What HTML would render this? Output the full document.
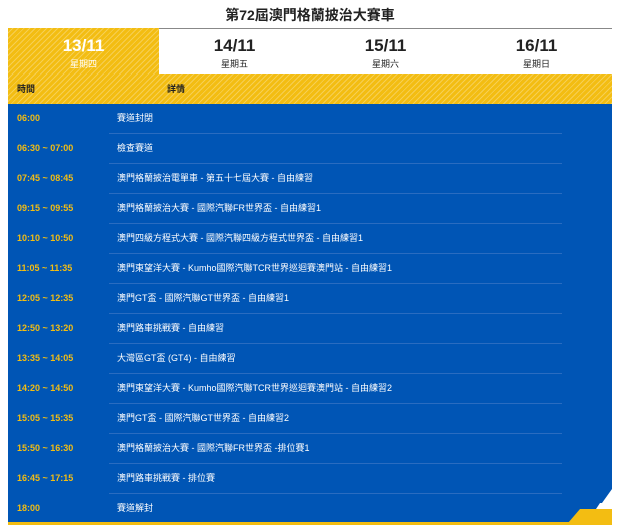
<!DOCTYPE html>
<html><head><meta charset="utf-8"><style>
*{margin:0;padding:0;box-sizing:border-box}
body{width:620px;height:529px;background:#fff;font-family:"Liberation Sans","Noto Sans CJK TC",sans-serif;position:relative;overflow:hidden}
.title{position:absolute;top:6px;left:0;width:620px;text-align:center;font-size:14px;line-height:18px;font-weight:bold;color:#222}
.stripe{background-color:#f3bd12;background-image:repeating-linear-gradient(135deg,rgba(255,255,255,0) 0 3px,rgba(255,255,255,.28) 3px 4px)}
.tabs{position:absolute;top:28px;left:8px;width:604px;height:46px;border-top:1px solid #888}
.tab{position:absolute;top:0;height:46px;width:151px;text-align:center;color:#222}
.tab b{display:block;font-size:17px;line-height:20px;margin-top:7px}
.tab span{display:block;font-size:9px;line-height:12px;margin-top:2px}
.hdr{position:absolute;top:74px;left:8px;width:604px;height:30px;font-size:9px;line-height:30px;color:#222;font-weight:bold}
.hdr span{position:absolute;top:0}
.body{position:absolute;top:104px;left:8px;width:604px;height:419px;background:#0055b5}
.bot{position:absolute;top:522px;left:8px;width:604px;height:3px;background:#f3bd12}
.row{position:absolute;left:0;width:604px;height:30px;font-size:9px;line-height:28px}
.row .t{position:absolute;left:9px;top:0;color:#f3bd12;font-weight:bold}
.row .d{position:absolute;left:109px;top:0;color:#fff}
.row .l{position:absolute;left:101px;top:29px;width:453px;height:1px;background:#2a6cc0}
</style></head><body>
<div class="title">第72屆澳門格蘭披治大賽車</div>
<div class="tabs">
<div class="tab stripe" style="left:0;top:-1px;height:47px;color:#fff"><b style="margin-top:8px">13/11</b><span>星期四</span></div>
<div class="tab" style="left:151px"><b>14/11</b><span>星期五</span></div>
<div class="tab" style="left:302px"><b>15/11</b><span>星期六</span></div>
<div class="tab" style="left:453px"><b>16/11</b><span>星期日</span></div>
</div>
<div class="hdr stripe"><span style="left:9px">時間</span><span style="left:159px">詳情</span></div>
<div class="body">
<div class="row" style="top:0"><span class="t">06:00</span><span class="d">賽道封閉</span><i class="l"></i></div>
<div class="row" style="top:30px"><span class="t">06:30 ~ 07:00</span><span class="d">檢查賽道</span><i class="l"></i></div>
<div class="row" style="top:60px"><span class="t">07:45 ~ 08:45</span><span class="d">澳門格蘭披治電單車 - 第五十七屆大賽 - 自由練習</span><i class="l"></i></div>
<div class="row" style="top:90px"><span class="t">09:15 ~ 09:55</span><span class="d">澳門格蘭披治大賽 - 國際汽聯FR世界盃 - 自由練習1</span><i class="l"></i></div>
<div class="row" style="top:120px"><span class="t">10:10 ~ 10:50</span><span class="d">澳門四級方程式大賽 - 國際汽聯四級方程式世界盃 - 自由練習1</span><i class="l"></i></div>
<div class="row" style="top:150px"><span class="t">11:05 ~ 11:35</span><span class="d">澳門東望洋大賽 - Kumho國際汽聯TCR世界巡迴賽澳門站 - 自由練習1</span><i class="l"></i></div>
<div class="row" style="top:180px"><span class="t">12:05 ~ 12:35</span><span class="d">澳門GT盃 - 國際汽聯GT世界盃 - 自由練習1</span><i class="l"></i></div>
<div class="row" style="top:210px"><span class="t">12:50 ~ 13:20</span><span class="d">澳門路車挑戰賽 - 自由練習</span><i class="l"></i></div>
<div class="row" style="top:240px"><span class="t">13:35 ~ 14:05</span><span class="d">大灣區GT盃 (GT4) - 自由練習</span><i class="l"></i></div>
<div class="row" style="top:270px"><span class="t">14:20 ~ 14:50</span><span class="d">澳門東望洋大賽 - Kumho國際汽聯TCR世界巡迴賽澳門站 - 自由練習2</span><i class="l"></i></div>
<div class="row" style="top:300px"><span class="t">15:05 ~ 15:35</span><span class="d">澳門GT盃 - 國際汽聯GT世界盃 - 自由練習2</span><i class="l"></i></div>
<div class="row" style="top:330px"><span class="t">15:50 ~ 16:30</span><span class="d">澳門格蘭披治大賽 - 國際汽聯FR世界盃 -排位賽1</span><i class="l"></i></div>
<div class="row" style="top:360px"><span class="t">16:45 ~ 17:15</span><span class="d">澳門路車挑戰賽 - 排位賽</span><i class="l"></i></div>
<div class="row" style="top:390px"><span class="t">18:00</span><span class="d">賽道解封</span></div>
<svg style="position:absolute;right:0;bottom:0" width="44" height="40" viewBox="0 0 44 40">
<polygon points="44,6 44,20 34,20" fill="#fff"/>
<polygon points="32,20 44,20 44,40 0,40 12,26 32,26" fill="#f3bd12"/>
<polygon points="44,20 44,26 28,26 32,20" fill="#fff"/>
</svg>
</div>
<div class="bot"></div>
</body></html>
